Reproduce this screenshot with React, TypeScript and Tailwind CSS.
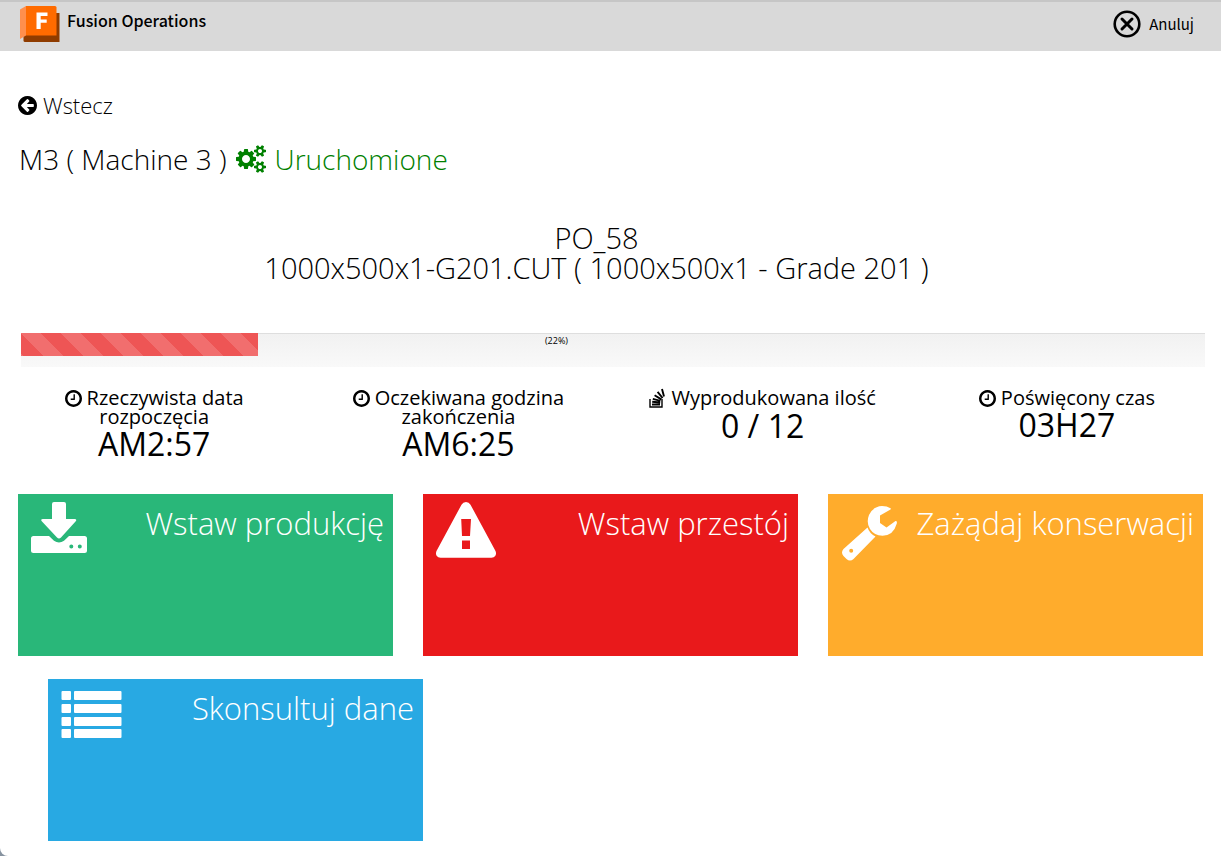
import type { ReactNode } from "react";

const CLOCK =
  "M1024 544v448q0 14-9 23t-23 9h-320q-14 0-23-9t-9-23v-64q0-14 9-23t23-9h224v-352q0-14 9-23t23-9h64q14 0 23 9t9 23zm416 352q0-148-73-273t-198-198-273-73-273 73-198 198-73 273 73 273 198 198 273 73 273-73 198-198 73-273zm224 0q0 209-103 385.5t-279.5 279.5-385.5 103-385.5-103-279.5-279.5-103-385.5 103-385.5 279.5-279.5 385.5-103 385.5 103 279.5 279.5 103 385.5z";
const ARROW =
  "M1408 960v-128q0-26-19-45t-45-19h-502l189-189q19-19 19-45t-19-45l-91-91q-18-18-45-18t-45 18l-362 362-91 91q-18 18-18 45t18 45l91 91 362 362q18 18 45 18t45-18l91-91q18-18 18-45t-18-45l-189-189h502q26 0 45-19t19-45zm256-64q0 209-103 385.5t-279.5 279.5-385.5 103-385.5-103-279.5-279.5-103-385.5 103-385.5 279.5-279.5 385.5-103 385.5 103 279.5 279.5 103 385.5z";
const BIG_COG =
  "M896 896q0-106-75-181t-181-75-181 75-75 181 75 181 181 75 181-75 75-181zM1280 805v185q0 10-7 19.5t-16 10.5l-155 24q-11 35-32 76 34 48 90 115 7 11 7 20 0 12-7 19-23 30-82.5 89.5t-78.5 59.5q-11 0-21-7l-115-90q-37 19-77 31-11 108-23 155-7 24-30 24h-186q-11 0-20-7.5t-10-17.5l-23-153q-34-10-75-31l-118 89q-7 7-20 7-11 0-21-8-144-133-144-160 0-9 7-19 10-14 41-53t47-61q-23-44-35-82l-152-24q-10-1-17-9.5t-7-19.5v-185q0-10 7-19.5t16-10.5l155-24q11-35 32-76-34-48-90-115-7-11-7-20 0-12 7-20 22-30 82-89t79-59q11 0 21 7l115 90q34-18 77-32 11-108 23-154 7-24 30-24h186q11 0 20 7.5t10 17.5l23 153q34 10 75 31l118-89q8-7 20-7 11 0 21 8 144 133 144 160 0 8-7 19-12 16-42 54t-45 60q23 48 34 82l152 23q10 2 17 10.5t7 19.5z";
const SMALL_COG =
  "M1664 1408q0-52-38-90t-90-38-90 38-38 90q0 53 37.5 90.5t90.5 37.5 90.5-37.5 37.5-90.5zM1920 1338v140q0 16-149 31-12 27-30 52 51 113 51 138 0 4-4 7-122 71-124 71-8 0-46-47t-52-68q-20 2-30 2t-30-2q-14 21-52 68t-46 47q-2 0-124-71-4-3-4-7 0-25 51-138-18-25-30-52-149-15-149-31v-140q0-16 149-31 13-29 30-52-51-113-51-138 0-4 4-7 4-2 35-20t59-34 30-16q8 0 46 46.5t52 67.5q20-2 30-2t30 2q51-71 92-112l6-2q4 0 124 70 4 3 4 7 0 25-51 138 17 23 30 52 149 15 149 31z";

function Logo() {
  return (
    <svg viewBox="0 0 40 36" className="h-9 w-10" aria-hidden="true">
      <path d="M35 7h4.500v29H5q-1.500 0-1.500-1.500V30z" fill="#8f3c00" />
      <path d="M0 3.500 6 0v29.500L0 33z" fill="#ff8f4d" />
      <path d="M6 0h29q1.500 0 1.500 1.500V29.500H6z" fill="#ff6b00" />
      <path d="M16.500 6.500h11v3.500h-6.800v3.500h6v3.300h-6V23h-4.200z" fill="#fff" />
    </svg>
  );
}

function ClockIcon() {
  return (
    <svg viewBox="128 128 1536 1536" className="mr-[5px] inline-block size-[17px] align-[-2px]" fill="currentColor" aria-hidden="true">
      <path d={CLOCK} />
    </svg>
  );
}

function StackIcon() {
  return (
    <svg viewBox="0 0 17 20" className="mr-[5px] inline-block h-5 w-[17px] align-[-3px]" fill="none" stroke="currentColor" aria-hidden="true">
      <path d="M1 11v8h12v-8" strokeWidth="1.400" />
      <path d="M3 16.500h8M3.200 13.800l8 .7M3.800 10.800l7.600 2M5.600 7.200l6.700 4.200M8.600 3.800l5 6.200M13 1l2 7.500" strokeWidth="1.900" />
    </svg>
  );
}

function Stat({ icon, label, value }: { icon: ReactNode; label: string; value: string }) {
  return (
    <div className="px-9 text-center">
      <h3 className="text-[20px] leading-[19px]">
        {icon}
        {label}
      </h3>
      <p className="text-[32px] leading-9">{value}</p>
    </div>
  );
}

function Tile({ color, icon, label }: { color: string; icon: ReactNode; label: string }) {
  return (
    <button type="button" className={`flex h-[162px] items-start justify-between pl-[13px] pr-[9px] pt-2 text-white ${color}`}>
      {icon}
      <span className="text-[31px] leading-[42px] font-light">{label}</span>
    </button>
  );
}

const tileIcon = "h-[60px] w-[61px]";

export default function App() {
  return (
    <div className="bg-[#8793a0]">
      <div className="min-h-screen rounded-bl-lg bg-white font-['Open_Sans',sans-serif] text-black">
        <header className="flex h-[51px] items-start justify-between border-t-2 border-[#c6c6c6] bg-[#d9d9d9] pt-1 pr-[27px] pl-5 font-['Noto_Sans_CJK_SC',sans-serif]">
          <div className="flex items-start gap-[7px]">
            <Logo />
            <h1 className="text-[16px] leading-7 font-medium">Fusion Operations</h1>
          </div>
          <button type="button" className="flex h-9 items-center gap-2 text-[15px]">
            <svg viewBox="0 0 28 28" className="size-7" fill="none" stroke="currentColor" strokeWidth="2.600" strokeLinecap="round" aria-hidden="true">
              <circle cx="14" cy="14" r="12.300" />
              <path d="m9 9 10 10M19 9 9 19" strokeWidth="3" />
            </svg>
            Anuluj
          </button>
        </header>

        <main className="pt-[39px] pr-4 pl-[18px]">
          <a href="#back" className="flex w-fit items-center gap-[6px] text-[22px] leading-[30px] font-light">
            <svg viewBox="128 128 1536 1536" className="size-[19px]" fill="currentColor" aria-hidden="true">
              <path d={ARROW} />
            </svg>
            Wstecz
          </a>

          <h2 className="mt-[19px] ml-px flex items-center gap-[9px] text-[28px] leading-10 font-light">
            M3 ( Machine 3 )
            <span className="flex items-center gap-[9px] text-[#008000]">
              <svg viewBox="0 0 1920 1792" className="h-7 w-[30px]" fill="currentColor" aria-hidden="true">
                <path d={BIG_COG} />
                <path d={SMALL_COG} />
                <path d={SMALL_COG} transform="translate(0 -1024)" />
              </svg>
              Uruchomione
            </span>
          </h2>

          <div className="mt-11 pr-[30px] text-center text-[29px] leading-[30px] font-light">
            <p>PO_58</p>
            <p>1000x500x1-G201.CUT ( 1000x500x1 - Grade 201 )</p>
          </div>

          <div
            role="progressbar"
            aria-label="PO_58"
            aria-valuenow={22}
            className="mt-[50px] ml-[3px] grid h-[34px] bg-linear-to-b from-[#f1f1f1] to-[#f9f9f9] shadow-[inset_0_1px_0_#dedede]"
          >
            <div className="col-start-1 row-start-1 h-[23px] w-1/5 bg-[#ee5555] bg-[linear-gradient(45deg,rgba(255,255,255,0.15)_25%,transparent_25%,transparent_50%,rgba(255,255,255,0.15)_50%,rgba(255,255,255,0.15)_75%,transparent_75%,transparent)] bg-[length:40px_40px]" />
            <span className="col-start-1 row-start-1 pr-[113px] text-center text-[9px] leading-4">(22%)</span>
          </div>

          <div className="mt-[21px] -mr-[14px] -ml-4 grid grid-cols-4">
            <Stat icon={<ClockIcon />} label="Rzeczywista data rozpoczęcia" value="AM2:57" />
            <Stat icon={<ClockIcon />} label="Oczekiwana godzina zakończenia" value="AM6:25" />
            <Stat icon={<StackIcon />} label="Wyprodukowana ilość" value="0 / 12" />
            <Stat icon={<ClockIcon />} label="Poświęcony czas" value="03H27" />
          </div>

          <div className="mt-8 grid grid-cols-3 gap-x-[30px] gap-y-[23px] pr-[2px] pb-[15px]">
            <Tile
              color="bg-[#29b779]"
              label="Wstaw produkcję"
              icon={
                <svg viewBox="0 0 61 60" className={tileIcon} fill="currentColor" aria-hidden="true">
                  <path d="M23 0h10q2 0 2 2v15h8.500q3 0 1 2.500L30 35.500q-2 2-4 0L11 19.500q-2-2.500 1-2.500h9V2q0-2 2-2z" />
                  <path
                    fillRule="evenodd"
                    d="M2.500 34h15.500l5 4.700q5 3.600 10 0l5-4.700h15.500q2.500 0 2.500 2.500v12q0 2.500-2.500 2.500h-51Q0 51 0 48.500v-12Q0 34 2.500 34zM38.300 44.500a2 2 0 1 0 4 0 2 2 0 1 0-4 0M46.800 44.500a2 2 0 1 0 4 0 2 2 0 1 0-4 0"
                  />
                </svg>
              }
            />
            <Tile
              color="bg-[#e9191b]"
              label="Wstaw przestój"
              icon={
                <svg viewBox="0 0 61 60" className={tileIcon} fill="currentColor" aria-hidden="true">
                  <path
                    fillRule="evenodd"
                    d="M30 0q3 0 4.500 2.700L59.500 49q1.200 3-.3 5-1.200 1.700-3.700 1.700h-51q-2.500 0-3.700-1.700-1.500-2-.3-5L25.500 2.700Q27 0 30 0zM25.200 17l.8 17h8l1-17zM26 38.600v8.400h8v-8.400z"
                  />
                </svg>
              }
            />
            <Tile
              color="bg-[#ffac2c]"
              label="Zażądaj konserwacji"
              icon={
                <svg viewBox="0 0 61 60" className={tileIcon} fill="currentColor" aria-hidden="true">
                  <path
                    fillRule="evenodd"
                    d="M26.500 25.500q2 6 8 9L12.500 57q-3.500 3-7 0L2.500 54q-3-3.500 0-7zM8.200 48.800a2 2 0 1 0 4 0 2 2 0 1 0-4 0"
                  />
                  <path d="M49.500 7.500 39 13.500v7.500l6.500 4.500L54.500 19q1.800-.3 1.300 2.500Q52.500 33.500 41.500 33.800 33 33.500 29 27t-1-14Q32 4.500 41 4q5 0 8.500 2.200.8.700 0 1.300z" />
                </svg>
              }
            />
            <div className="-mr-[30px] flex flex-col pl-[30px]">
              <Tile
                color="bg-[#28a9e3]"
                label="Skonsultuj dane"
                icon={
                  <svg viewBox="0 0 61 60" className={tileIcon} fill="currentColor" aria-hidden="true">
                    {[4, 17, 30, 42].map((y) => (
                      <g key={y}>
                        <rect x="0.500" y={y} width="9.500" height="9" rx="1" />
                        <rect x="13" y={y} width="47.500" height="9" rx="1" />
                      </g>
                    ))}
                  </svg>
                }
              />
            </div>
          </div>
        </main>
      </div>
    </div>
  );
}
